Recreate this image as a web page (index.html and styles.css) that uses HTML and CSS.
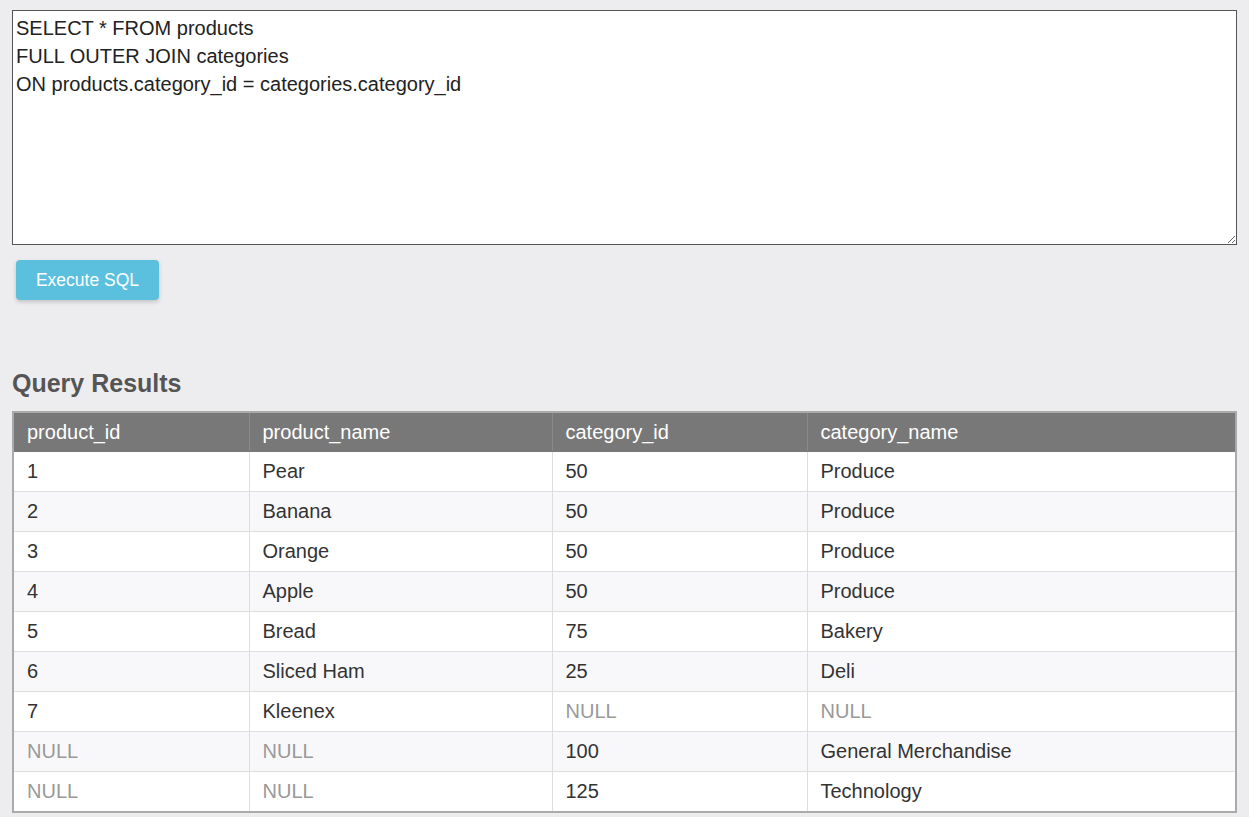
FILE: index.html
```html
<!DOCTYPE html>
<html>
<head>
<meta charset="utf-8">
<link rel="stylesheet" href="styles.css">
</head>
<body>
<textarea class="sql-input">SELECT * FROM products
FULL OUTER JOIN categories
ON products.category_id = categories.category_id</textarea>
<button class="exec-btn">Execute SQL</button>
<h3 class="results-title">Query Results</h3>
<table class="results">
  <colgroup>
    <col class="c1"><col class="c2"><col class="c3"><col class="c4">
  </colgroup>
  <thead>
    <tr><th>product_id</th><th>product_name</th><th>category_id</th><th>category_name</th></tr>
  </thead>
  <tbody>
    <tr><td>1</td><td>Pear</td><td>50</td><td>Produce</td></tr>
    <tr><td>2</td><td>Banana</td><td>50</td><td>Produce</td></tr>
    <tr><td>3</td><td>Orange</td><td>50</td><td>Produce</td></tr>
    <tr><td>4</td><td>Apple</td><td>50</td><td>Produce</td></tr>
    <tr><td>5</td><td>Bread</td><td>75</td><td>Bakery</td></tr>
    <tr><td>6</td><td>Sliced Ham</td><td>25</td><td>Deli</td></tr>
    <tr><td>7</td><td>Kleenex</td><td class="null">NULL</td><td class="null">NULL</td></tr>
    <tr><td class="null">NULL</td><td class="null">NULL</td><td>100</td><td>General Merchandise</td></tr>
    <tr><td class="null">NULL</td><td class="null">NULL</td><td>125</td><td>Technology</td></tr>
  </tbody>
</table>
</body>
</html>
```

FILE: styles.css
```css
html, body {
  margin: 0;
  background: #ededef;
}
body {
  padding: 10px 12px;
  font-family: "Liberation Sans", Arial, sans-serif;
  color: #333;
}
.sql-input {
  display: block;
  box-sizing: border-box;
  width: 1225px;
  height: 235px;
  margin: 0;
  padding: 3px 3px;
  border: 1px solid #555;
  border-radius: 0;
  background: #fff;
  color: #222;
  font-family: "Liberation Sans", Arial, sans-serif;
  font-size: 20px;
  line-height: 28px;
  resize: vertical;
  outline: none;
}
.exec-btn {
  display: block;
  margin: 15px 0 0 4px;
  width: 143px;
  height: 40px;
  border: none;
  border-radius: 4px;
  background: #5bc0de;
  color: #fff;
  font-family: "Liberation Sans", Arial, sans-serif;
  font-size: 17.5px;
  box-shadow: 0 2px 4px rgba(0,0,0,0.18);
  cursor: pointer;
}
.results-title {
  margin: 69px 0 14px 0;
  font-size: 25px;
  line-height: 28px;
  font-weight: bold;
  color: #555;
}
.results {
  width: 1225px;
  border-collapse: collapse;
  border: 2px solid #aaa;
  font-size: 20px;
  table-layout: fixed;
}
.c1 { width: 236px; }
.c2 { width: 303px; }
.c3 { width: 255px; }
.c4 { width: auto; }
.results th {
  background: #787878;
  color: #fff;
  font-weight: normal;
  text-align: left;
  height: 38px;
  padding: 0 13px;
  border-left: 1px solid #8a8a8a;
  border-bottom: 1px solid #787878;
}
.results td {
  height: 39px;
  padding: 0 13px;
  border: 1px solid #ddd;
  background: #fff;
}
.results tbody tr:nth-child(even) td {
  background: #f8f8fa;
}
.results td.null {
  color: #999;
}
```
